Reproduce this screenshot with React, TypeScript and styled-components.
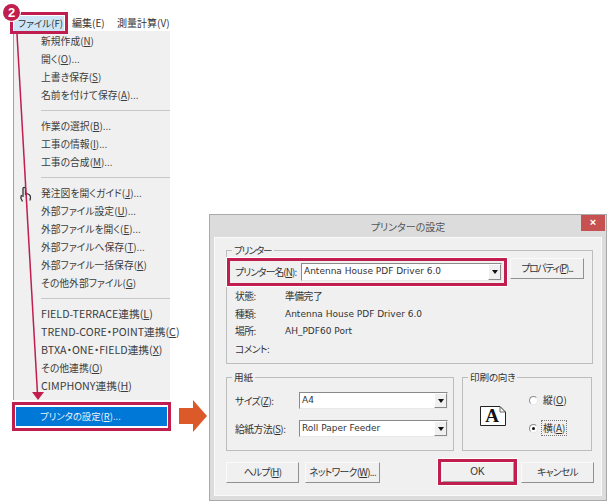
import React from "react"
import styled, { createGlobalStyle } from "styled-components"

const RED = "#bf1e4e"

const GlobalStyle = createGlobalStyle`
  * {
    box-sizing: border-box;
  }
  html, body {
    margin: 0;
    background: #fff;
  }
  body {
    font-family: "Noto Sans CJK JP", "Liberation Sans", sans-serif;
    font-feature-settings: "palt";
    color: #333;
    overflow: hidden;
  }
`

const Page = styled.div`
  position: relative;
  display: flex;
  width: 610px;
  height: 501px;
  overflow: hidden;
`

const LeftColumn = styled.div`
  display: flex;
  flex-direction: column;
  flex: none;
  width: 159px;
  margin-left: 12px;
  padding-top: 12px;
`

const MenuBar = styled.div`
  display: flex;
  align-items: center;
  height: 22px;
  font-size: 10px;
  line-height: 14px;
  margin-bottom: -3px;
  position: relative;
  z-index: 1;
`

const FileFrame = styled.div`
  display: flex;
  flex: none;
  width: 58px;
  height: 22px;
  margin-left: -2px;
  border: 3px solid ${RED};
  background: #fff;
  padding: 1px;
`

const FileItem = styled.div`
  flex: 1;
  background: #cde6f7;
  padding-left: 4px;
  font-size: 9.6px;
  line-height: 14px;
  height: 15px;
  white-space: nowrap;
`

const BarItem = styled.div<{ $width: number }>`
  flex: none;
  width: ${(p) => p.$width}px;
  margin-left: 4px;
  white-space: nowrap;
`

const MenuPanel = styled.div`
  width: 157px;
  height: 369px;
  margin-left: 1px;
  padding: 1px 0 0 27px;
  background: #f0f0f0;
  border-left: 1px solid #a3a3a3;
  position: relative;
`

const MenuRow = styled.div<{ $latin?: boolean }>`
  height: 18px;
  font-size: ${(p) => (p.$latin ? "10.7px" : "9.8px")};
  line-height: 18px;
  white-space: nowrap;
  color: #3c3c3c;
`

const Separator = styled.div`
  height: 1px;
  background: #c8c8c8;
  margin: 6px 0;
`

const SelectedFrame = styled.div`
  width: 159px;
  height: 29px;
  margin-top: 2px;
  border: 3px solid ${RED};
  background: #fff;
  padding: 2px 1px;
`

const SelectedRow = styled.div`
  height: 19px;
  background: #0078d7;
  color: #e8f2fb;
  font-size: 9.4px;
  line-height: 18px;
  padding-left: 24px;
`

const NextArrow = styled.svg`
  align-self: flex-start;
  width: 28px;
  height: 32px;
  margin: 400px 0 0 8px;
  flex: none;
`

const Dialog = styled.div`
  display: flex;
  flex-direction: column;
  width: 398px;
  height: 287px;
  margin: 214px 0 0 2px;
  background: #dcdcdc;
  border: 1px solid #a9a9a9;
  flex: none;
  padding: 0 4px 4px;
`

const TitleBar = styled.div`
  display: flex;
  justify-content: center;
  height: 22px;
  font-size: 10px;
  line-height: 23px;
  color: #555;
  position: relative;
`

const CloseButton = styled.div`
  position: absolute;
  right: -3px;
  top: 0;
  width: 24px;
  height: 16px;
  background: #c75050;
  color: #fff;
  font-family: "Liberation Sans", sans-serif;
  font-size: 11px;
  font-weight: 700;
  line-height: 15px;
  text-align: center;
`

const Client = styled.div`
  flex: 1;
  display: flex;
  flex-direction: column;
  background: #f0f0f0;
  border: 1px solid #fafafa;
  padding: 12px 8px 0 11px;
`

const Group = styled.div<{ $width?: number; $height: number }>`
  position: relative;
  width: ${(p) => (p.$width ? `${p.$width}px` : "100%")};
  height: ${(p) => p.$height}px;
  border: 1px solid #bdbdbd;
`

const GroupLabel = styled.div<{ $tight?: boolean }>`
  position: absolute;
  left: 5px;
  top: -7px;
  padding: 0 2px;
  background: #f0f0f0;
  font-size: 9.6px;
  line-height: 13px;
  letter-spacing: ${(p) => (p.$tight ? "-1.1px" : "-0.2px")};
  color: #333;
`

const PrinterFrame = styled.div`
  display: flex;
  align-items: center;
  flex: none;
  width: 280px;
  height: 28px;
  margin: 7px 0 0 0;
  border: 3px solid ${RED};
  padding-left: 5px;
  box-shadow: 0 0 0 1px #fff;
  background: #f0f0f0;
`

const PrinterRow = styled.div`
  display: flex;
  align-items: center;
  gap: 3px;
`

const FieldLabel = styled.div<{ $width: number; $tight?: boolean }>`
  width: ${(p) => p.$width}px;
  flex: none;
  font-size: 9.8px;
  letter-spacing: ${(p) => (p.$tight ? "-0.9px" : "-0.5px")};
  line-height: 14px;
  color: #333;
  white-space: nowrap;
`

const Combo = styled.div<{ $width: number; $height: number }>`
  display: flex;
  justify-content: space-between;
  width: ${(p) => p.$width}px;
  height: ${(p) => p.$height}px;
  background: #fff;
  border: 1px solid;
  border-color: #8a8a8a #e8e8e8 #e8e8e8 #8a8a8a;
  flex: none;
`

const ComboText = styled.div`
  font-family: "DejaVu Sans", sans-serif;
  font-size: 9px;
  line-height: 14px;
  padding-left: 2px;
  color: #333;
  white-space: nowrap;
`

const ComboButton = styled.div`
  display: flex;
  align-items: center;
  justify-content: center;
  width: 13px;
  background: #f0f0f0;
  border: 1px solid;
  border-color: #fff #8a8a8a #8a8a8a #fff;
  &::after {
    content: "";
    border: 3px solid transparent;
    border-top: 4px solid #111;
    border-bottom: 0;
  }
`

const PushButton = styled.div<{ $width: number; $tight?: boolean }>`
  width: ${(p) => p.$width}px;
  height: 21px;
  flex: none;
  background: #f0f0f0;
  border: 1px solid;
  border-color: #fafafa #909090 #909090 #fafafa;
  font-size: 9.8px;
  letter-spacing: ${(p) => (p.$tight ? "-1.2px" : "-0.7px")};
  line-height: 18px;
  text-align: center;
  color: #333;
  white-space: nowrap;
`

const InfoList = styled.div`
  display: flex;
  flex-direction: column;
  margin: 1px 0 0 8px;
`

const InfoRow = styled.div`
  display: flex;
  align-items: center;
  height: 17.7px;
`

const PlainValue = styled(ComboText)`
  padding-left: 0;
`

const Lower = styled.div`
  display: flex;
  gap: 8px;
  margin-top: 13px;
`

const PaperBody = styled.div`
  display: flex;
  flex-direction: column;
  gap: 11px;
  padding: 14px 0 0 8px;
`

const PaperRow = styled.div`
  display: flex;
  align-items: center;
`

const OrientBody = styled.div`
  display: flex;
  align-items: center;
  height: 100%;
  padding: 0 0 0 17px;
`

const PageGlyph = styled.svg`
  width: 26px;
  height: 20px;
  margin-top: 3px;
  flex: none;
`

const RadioColumn = styled.div`
  display: flex;
  flex-direction: column;
  gap: 10px;
  margin-left: 23px;
`

const RadioRow = styled.div`
  display: flex;
  align-items: center;
  gap: 4px;
  height: 18px;
  font-size: 9.8px;
  line-height: 14px;
  color: #333;
`

const RadioMark = styled.span<{ $on?: boolean }>`
  display: flex;
  align-items: center;
  justify-content: center;
  width: 9px;
  height: 9px;
  border-radius: 50%;
  background: #fff;
  border: 1px solid;
  border-color: #8c8c8c #e8e8e8 #e8e8e8 #8c8c8c;
  &::after {
    content: "";
    width: 3px;
    height: 3px;
    border-radius: 50%;
    background: ${(p) => (p.$on ? "#111" : "transparent")};
  }
`

const FocusText = styled.span<{ $focus?: boolean }>`
  outline: ${(p) => (p.$focus ? "1px dotted #777" : "none")};
  padding: 0 1px;
`

const ButtonBar = styled.div`
  display: flex;
  align-items: center;
  gap: 6px;
  margin-top: 8px;
`

const OkFrame = styled.div`
  display: flex;
  align-items: center;
  justify-content: center;
  flex: none;
  width: 79px;
  height: 26px;
  margin: 0 -2px 0 52px;
  border: 3px solid ${RED};
  box-shadow: 0 0 0 1px #fff;
`

const OkButton = styled(PushButton)`
  border-color: #fafafa #a0a0a0 #a0a0a0 #fafafa;
  height: 20px;
  font-family: "Liberation Sans", sans-serif;
  font-size: 10px;
  letter-spacing: 0;
`

const Overlay = styled.svg`
  position: absolute;
  left: 0;
  top: 0;
  z-index: 2;
  pointer-events: none;
`

const Badge = styled.div`
  position: absolute;
  left: 3px;
  top: 4px;
  z-index: 3;
  width: 17px;
  height: 17px;
  border-radius: 50%;
  background: ${RED};
  box-shadow: 0 0 0 1px #fff;
  color: #fff;
  font-family: "Liberation Sans", sans-serif;
  font-size: 13px;
  font-weight: 700;
  line-height: 17px;
  text-align: center;
`

const HandCursor = styled.svg`
  position: absolute;
  left: 6px;
  top: 155px;
  width: 12px;
  height: 17px;
`

const Key = styled.span`
  text-decoration: underline;
  text-underline-offset: 1px;
`

function label(before: string, key: string, after = "") {
  return (
    <>
      {before}(<Key>{key}</Key>){after}
    </>
  )
}

const groups: [string, string, string?][][] = [
  [
    ["新規作成", "N"],
    ["開く", "O", "..."],
    ["上書き保存", "S"],
    ["名前を付けて保存", "A", "..."],
  ],
  [
    ["作業の選択", "B", "..."],
    ["工事の情報", "I", "..."],
    ["工事の合成", "M", "..."],
  ],
  [
    ["発注図を開くガイド", "J", "..."],
    ["外部ファイル設定", "U", "..."],
    ["外部ファイルを開く", "E", "..."],
    ["外部ファイルへ保存", "T", "..."],
    ["外部ファイル一括保存", "K"],
    ["その他外部ファイル", "G"],
  ],
  [
    ["FIELD-TERRACE連携", "L"],
    ["TREND-CORE・POINT連携", "C"],
    ["BTXA・ONE・FIELD連携", "X"],
    ["その他連携", "O"],
    ["CIMPHONY連携", "H"],
  ],
]

const info = [
  ["状態:", "準備完了"],
  ["種類:", "Antenna House PDF Driver 6.0"],
  ["場所:", "AH_PDF60 Port"],
  ["コメント:", ""],
]

export default function App() {
  return (
    <Page>
      <GlobalStyle />
      <LeftColumn>
        <MenuBar>
          <FileFrame>
            <FileItem>ファイル(F)</FileItem>
          </FileFrame>
          <BarItem $width={41}>編集(E)</BarItem>
          <BarItem $width={53}>測量計算(V)</BarItem>
        </MenuBar>
        <MenuPanel>
          <HandCursor viewBox="0 0 12 17">
            <path
              d="M3 11V2.500C3 1 5.500 1 5.500 2.500V9M5.500 7 9 8.500C10 9 10.500 10 10.500 11.500L10 14.500M1.500 9 .8 12 2.500 15.500"
              fill="none"
              stroke="#333"
              strokeWidth="1.300"
            />
          </HandCursor>
          {groups.map((rows, i) => (
            <React.Fragment key={i}>
              {i > 0 && <Separator />}
              {rows.map(([text, key, after]) => (
                <MenuRow key={text} $latin={/^[A-Z]/.test(text)}>
                  {label(text, key, after)}
                </MenuRow>
              ))}
            </React.Fragment>
          ))}
        </MenuPanel>
        <SelectedFrame>
          <SelectedRow>{label("プリンタの設定", "R", "...")}</SelectedRow>
        </SelectedFrame>
      </LeftColumn>

      <NextArrow viewBox="0 0 28 32">
        <path d="M0 8H14V0L28 16 14 32V24H0Z" fill="#dc5a2a" />
      </NextArrow>

      <Dialog>
        <TitleBar>
          プリンターの設定
          <CloseButton>×</CloseButton>
        </TitleBar>
        <Client>
          <Group $height={114}>
            <GroupLabel $tight>プリンター</GroupLabel>
            <PrinterRow>
              <PrinterFrame>
                <FieldLabel $width={66} $tight>
                  {label("プリンター名", "N", ":")}
                </FieldLabel>
                <Combo $width={201} $height={18}>
                  <ComboText>Antenna House PDF Driver 6.0</ComboText>
                  <ComboButton />
                </Combo>
              </PrinterFrame>
              <PushButton $width={74} $tight>
                {label("プロパティ", "P", "...")}
              </PushButton>
            </PrinterRow>
            <InfoList>
              {info.map(([name, value]) => (
                <InfoRow key={name}>
                  <FieldLabel $width={50}>{name}</FieldLabel>
                  {/^[A-Z]/.test(value) ? (
                    <PlainValue>{value}</PlainValue>
                  ) : (
                    <FieldLabel $width={80}>{value}</FieldLabel>
                  )}
                </InfoRow>
              ))}
            </InfoList>
          </Group>
          <Lower>
            <Group $width={228} $height={74}>
              <GroupLabel>用紙</GroupLabel>
              <PaperBody>
                <PaperRow>
                  <FieldLabel $width={64}>{label("サイズ", "Z", ":")}</FieldLabel>
                  <Combo $width={149} $height={17}>
                    <ComboText>A4</ComboText>
                    <ComboButton />
                  </Combo>
                </PaperRow>
                <PaperRow>
                  <FieldLabel $width={64}>{label("給紙方法", "S", ":")}</FieldLabel>
                  <Combo $width={149} $height={17}>
                    <ComboText>Roll Paper Feeder</ComboText>
                    <ComboButton />
                  </Combo>
                </PaperRow>
              </PaperBody>
            </Group>
            <Group $width={130} $height={74}>
              <GroupLabel>印刷の向き</GroupLabel>
              <OrientBody>
                <PageGlyph viewBox="0 0 26 20">
                  <path d="M.5.5H20L25.500 6V19.500H.5Z" fill="#fff" stroke="#222" />
                  <path d="M20 .5V6H25.500" fill="none" stroke="#666" />
                  <text x="12" y="16" textAnchor="middle" fontFamily="Liberation Serif" fontWeight="700" fontSize="19" fill="#111">
                    A
                  </text>
                </PageGlyph>
                <RadioColumn>
                  <RadioRow>
                    <RadioMark />
                    <FocusText>{label("縦", "O")}</FocusText>
                  </RadioRow>
                  <RadioRow>
                    <RadioMark $on />
                    <FocusText $focus>{label("横", "A")}</FocusText>
                  </RadioRow>
                </RadioColumn>
              </OrientBody>
            </Group>
          </Lower>
          <ButtonBar>
            <PushButton $width={73}>{label("ヘルプ", "H")}</PushButton>
            <PushButton $width={75}>{label("ネットワーク", "W", "...")}</PushButton>
            <OkFrame>
              <OkButton $width={72}>OK</OkButton>
            </OkFrame>
            <PushButton $width={73}>キャンセル</PushButton>
          </ButtonBar>
        </Client>
      </Dialog>

      <Overlay width="610" height="501" viewBox="0 0 610 501">
        <path d="M17 34 37.500 394" fill="none" stroke={RED} strokeWidth="1.500" />
        <path d="M32 392H44L38 400Z" fill={RED} />
      </Overlay>
      <Badge>2</Badge>
    </Page>
  )
}
